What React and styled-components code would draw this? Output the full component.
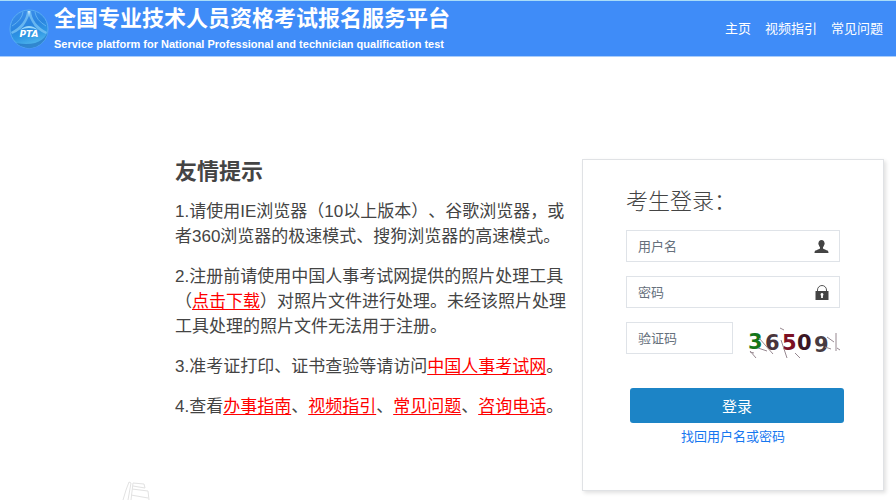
import styled, { createGlobalStyle } from "styled-components";

const GlobalStyle = createGlobalStyle`
  * {
    box-sizing: border-box;
  }

  body {
    margin: 0;
    background: #fff;
    color: #444;
    font-family: "Liberation Sans", "Noto Sans CJK SC", sans-serif;
    font-size: 13px;
    text-spacing-trim: space-all;
  }

  h1, h2, p {
    margin: 0;
  }
`;

const Header = styled.header`
  display: flex;
  align-items: center;
  justify-content: space-between;
  height: 57px;
  padding: 0 13px 0 8px;
  background: #3f8cf8;
  border-top: 1px solid #a9dcf8;
  border-bottom: 1px solid #a9cdfb;
`;

const Brand = styled.div`
  display: flex;
  align-items: center;
  gap: 4px;
  color: #fff;

  svg {
    flex: none;
  }
`;

const SiteName = styled.h1`
  font-size: 22px;
  line-height: 30px;
`;

const SiteNameEn = styled.p`
  font-size: 11px;
  font-weight: bold;
  line-height: 20px;
`;

const Nav = styled.nav`
  display: flex;
  gap: 14px;

  a {
    color: #fff;
    line-height: 20px;
    text-decoration: none;
  }
`;

const Main = styled.main`
  display: flex;
  align-items: flex-start;
  gap: 15px;
  padding: 102px 12px 0 122px;
`;

const Left = styled.div`
  flex: 1;

  > svg {
    display: block;
    margin-top: 62px;
  }
`;

const Tips = styled.section`
  display: flex;
  flex-direction: column;
  gap: 15px;
  padding-left: 53px;
  font-size: 17px;
  line-height: 25px;

  h2 {
    font-size: 22px;
  }

  a {
    color: #f00;
    text-underline-offset: 2px;
  }
`;

const Card = styled.section`
  flex: none;
  width: 302px;
  padding: 25px 43px 43px;
  border: 1px solid #e0e2e5;
  box-shadow: 2px 2px 4px rgba(0, 0, 0, 0.12);
`;

const CardTitle = styled.h2`
  margin-bottom: 12px;
  font-size: 22px;
  font-weight: 300;
  line-height: 33px;
`;

const Form = styled.form`
  display: flex;
  flex-direction: column;
  gap: 14px;
`;

const Field = styled.label`
  display: flex;
  align-items: center;
  width: ${(props) => (props.$half ? "50%" : "100%")};
  height: 32px;
  padding: 0 10px 0 11px;
  border: 1px solid #dfe3e8;

  input {
    flex: 1;
    min-width: 0;
    padding: 0;
    border: 0;
    outline: 0;
    background: none;
    color: #444;
    font: inherit;
  }

  input::placeholder {
    color: #66707c;
    opacity: 1;
  }
`;

const CodeRow = styled.div`
  display: flex;
  align-items: center;
  justify-content: space-between;
  height: 32px;

  svg {
    flex: none;
  }
`;

const Submit = styled.button`
  width: 100%;
  height: 35px;
  margin: 20px 0 0 4px;
  border: 0;
  border-radius: 3px;
  background: #1c84c6;
  color: #fff;
  font: inherit;
  font-size: 15px;
`;

const Forgot = styled.p`
  margin-top: 4px;
  line-height: 20px;
  text-align: center;

  a {
    color: #1677f0;
    text-decoration: none;
  }
`;

const Logo = () => (
  <svg width="42" height="42" viewBox="0 0 42 42" aria-hidden="true">
    <defs>
      <linearGradient id="ball" x1="0" y1="0" x2="0.3" y2="1">
        <stop offset="0" stopColor="#3f8eee" />
        <stop offset="0.5" stopColor="#2a86e0" />
        <stop offset="0.75" stopColor="#2f97e4" />
        <stop offset="1" stopColor="#4fb4ec" />
      </linearGradient>
    </defs>
    <circle cx="21" cy="21" r="19" fill="url(#ball)" stroke="#5aaef3" strokeWidth="1" />
    <path d="M8 35A19 19 0 0 0 40 22C39 31 28 39 8 35Z" fill="#1d69bd" opacity="0.6" />
    <path
      d="M19 3Q18 16 3 24L4 26Q14 22 18 14L21 8L24 14Q28 22 38 26L39 24Q24 16 23 3Z"
      fill="#7cc6f6"
      opacity="0.75"
    />
    <path d="M20 3H22L21 8Z" fill="#cbeafc" />
    <path
      d="M15 4Q14 12 4 18M27 4Q28 12 38 18"
      fill="none"
      stroke="#6bbaf4"
      strokeWidth="1"
      opacity="0.8"
    />
    <path d="M12 22Q21 14 30 22Q21 18 12 22Z" fill="#9ad7fa" />
    <text x="21" y="29" fill="#fff" fontFamily="DejaVu Sans" fontSize="9" fontWeight="bold" fontStyle="italic" textAnchor="middle">
      PTA
    </text>
  </svg>
);

const UserIcon = () => (
  <svg width="15" height="15" viewBox="0 0 15 15" fill="#444" aria-hidden="true">
    <path d="M7.5 1C5.6 1 4.4 2.3 4.5 4.2C4.1 4.4 4.3 5.6 4.8 5.8C5 7 5.5 7.7 6 8.2V9.4C5.5 10.2 2.5 10.8 1.4 11.6C.8 12 .6 12.8.5 14H14.5C14.4 12.8 14.2 12 13.6 11.6C12.5 10.8 9.5 10.2 9 9.4V8.2C9.5 7.7 10 7 10.2 5.8C10.7 5.6 10.9 4.4 10.5 4.2C10.6 2.3 9.4 1 7.5 1Z" />
  </svg>
);

const LockIcon = () => (
  <svg width="14" height="15" viewBox="0 0 14 15" aria-hidden="true">
    <path d="M2.5 6V5a4.5 4.5 0 0 1 9 0V6" fill="none" stroke="#555" strokeWidth="1" />
    <path d="M.5 6H13.5V15H.5Z" fill="#444" />
    <path d="M7 8a1.6 1.6 0 0 0-.9 2.8V13h1.8v-2.2A1.6 1.6 0 0 0 7 8Z" fill="#fff" />
  </svg>
);

const digits = [
  { char: "3", x: 0, y: 27, color: "#14761b" },
  { char: "6", x: 17, y: 28, color: "#4a343b" },
  { char: "5", x: 34, y: 28, color: "#7c1024" },
  { char: "0", x: 49, y: 28, color: "#3b1724" },
  { char: "9", x: 66, y: 30, color: "#473b41" },
];

const Captcha = () => (
  <svg width="92" height="32" viewBox="0 0 92 32" overflow="visible" aria-label="36509">
    <g fontFamily="DejaVu Sans" fontSize="21" fontWeight="bold">
      {digits.map((d) => (
        <text key={d.char} x={d.x} y={d.y} fill={d.color}>
          {d.char}
        </text>
      ))}
    </g>
    <path
      d="M2 29L8 36M2 30L6 31M11 16L25 32M10 26L19 29M32 6L36 8M33 18L39 36M47 31L52 36M79 15L86 20M77 25L83 27M88 11V29M89 26L92 28"
      fill="none"
      stroke="#978890"
      strokeWidth="1"
    />
  </svg>
);

const Books = () => (
  <svg width="30" height="19" viewBox="0 0 30 19" fill="none" stroke="#e2e2e2" aria-hidden="true">
    <path d="M7 1L4 9L1 19M7 1L9 2L6 19M11 2L22 3L23 7L11 5M11 2L9 19M10 8L26 10L27 19M9 14L26 17" />
  </svg>
);

const App = () => (
  <>
    <GlobalStyle />
    <Header>
      <Brand>
        <Logo />
        <div>
          <SiteName>全国专业技术人员资格考试报名服务平台</SiteName>
          <SiteNameEn>
            Service platform for National Professional and technician
            qualification test
          </SiteNameEn>
        </div>
      </Brand>
      <Nav>
        <a href="#home">主页</a>
        <a href="#video">视频指引</a>
        <a href="#faq">常见问题</a>
      </Nav>
    </Header>
    <Main>
      <Left>
        <Tips>
          <h2>友情提示</h2>
          <p>
            1.请使用IE浏览器（10以上版本）、谷歌浏览器，或者360浏览器的极速模式、搜狗浏览器的高速模式。
          </p>
          <p>
            2.注册前请使用中国人事考试网提供的照片处理工具（
            <a href="#download">点击下载</a>
            ）对照片文件进行处理。未经该照片处理工具处理的照片文件无法用于注册。
          </p>
          <p>
            3.准考证打印、证书查验等请访问<a href="#cpta">中国人事考试网</a>。
          </p>
          <p>
            4.查看<a href="#guide">办事指南</a>、<a href="#video">视频指引</a>、
            <a href="#faq">常见问题</a>、<a href="#phone">咨询电话</a>。
          </p>
        </Tips>
        <Books />
      </Left>
      <Card>
        <CardTitle>考生登录：</CardTitle>
        <Form onSubmit={(e) => e.preventDefault()}>
          <Field>
            <input name="username" placeholder="用户名" aria-label="用户名" />
            <UserIcon />
          </Field>
          <Field>
            <input type="password" name="password" placeholder="密码" aria-label="密码" />
            <LockIcon />
          </Field>
          <CodeRow>
            <Field $half>
              <input name="code" placeholder="验证码" aria-label="验证码" />
            </Field>
            <Captcha />
          </CodeRow>
          <Submit type="submit">登录</Submit>
        </Form>
        <Forgot>
          <a href="#forgot">找回用户名或密码</a>
        </Forgot>
      </Card>
    </Main>
  </>
);

export default App;
